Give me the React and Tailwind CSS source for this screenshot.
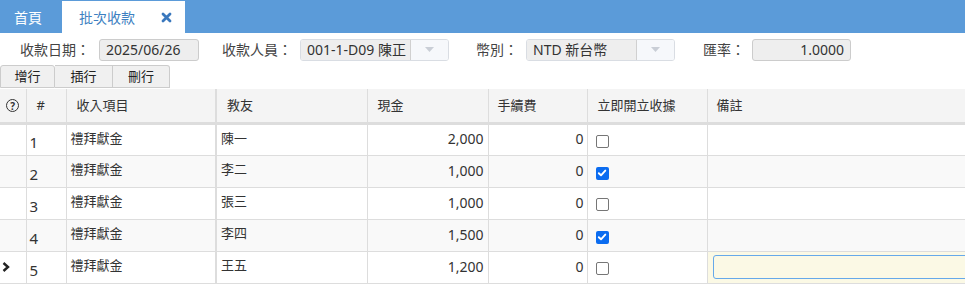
import React from 'react';

const rows = [
    { no: 1, item: '禮拜獻金', name: '陳一', cash: '2,000', fee: '0', receipt: false },
    { no: 2, item: '禮拜獻金', name: '李二', cash: '1,000', fee: '0', receipt: true },
    { no: 3, item: '禮拜獻金', name: '張三', cash: '1,000', fee: '0', receipt: false },
    { no: 4, item: '禮拜獻金', name: '李四', cash: '1,500', fee: '0', receipt: true },
    { no: 5, item: '禮拜獻金', name: '王五', cash: '1,200', fee: '0', receipt: false },
];

function Check({ on }) {
    if (on) {
        return (
            <span className="inline-flex w-[13px] h-[13px] rounded-[2px] bg-[#0b6cf0] items-center justify-center">
                <svg width="10" height="10" viewBox="0 0 10 10">
                    <path d="M1.8 5.2 L4 7.3 L8.3 2.6" fill="none" stroke="white" strokeWidth="1.9" strokeLinecap="round" strokeLinejoin="round" />
                </svg>
            </span>
        );
    }
    return <span className="inline-block w-[13px] h-[13px] rounded-[2px] border border-[#767676] bg-white"></span>;
}

function Caret() {
    return (
        <svg width="9" height="5" viewBox="0 0 9 5"><path d="M0 0 L9 0 L4.5 5 Z" fill="#c9ced6" /></svg>
    );
}

export default function App() {
    return (
        <div className="w-[965px] h-[305px] overflow-hidden bg-white text-[#333] text-[13px]" style={{ fontFamily: '"Noto Sans", "Noto Sans CJK TC", sans-serif' }}>
            {/* tab bar */}
            <div className="h-[33px] bg-[#5b9bd9] flex items-end">
                <div className="w-[62px] h-[32px] flex items-center pl-[14px] text-white text-[14px]">首頁</div>
                <div className="w-[123px] h-[32px] bg-white flex items-center pl-[17px] text-[14px] text-[#3d7fc1]">
                    <span>批次收款</span>
                    <svg className="ml-[26px]" width="11" height="11" viewBox="0 0 11 11">
                        <path d="M2 2 L9 9 M9 2 L2 9" stroke="#3a78bd" strokeWidth="2.8" strokeLinecap="round" />
                    </svg>
                </div>
            </div>

            {/* form row */}
            <div className="flex items-center h-[32px] pt-[1px]">
                <span className="ml-[20px] w-[79px] text-[14px] text-[#444]">收款日期：</span>
                <div className="w-[100px] h-[22px] bg-[#eeeeee] border border-[#cccccc] rounded-[3px] flex items-center pl-[6px] text-[14px] text-[#333]">2025/06/26</div>
                <span className="ml-[23px] w-[78px] text-[14px] text-[#444]">收款人員：</span>
                <div className="w-[149px] h-[22px] border border-[#d9dde3] rounded-[3px] flex overflow-hidden">
                    <div className="w-[110px] bg-[#eeeeee] border-r border-[#d0d0d0] flex items-center pl-[6px] text-[14px] whitespace-nowrap overflow-hidden">001-1-D09 陳正</div>
                    <div className="flex-1 bg-[#f6f8fb] flex items-center justify-center"><Caret /></div>
                </div>
                <span className="ml-[27px] w-[50px] text-[14px] text-[#444]">幣別：</span>
                <div className="w-[149px] h-[22px] border border-[#d9dde3] rounded-[3px] flex overflow-hidden">
                    <div className="w-[110px] bg-[#eeeeee] border-r border-[#d0d0d0] flex items-center pl-[6px] text-[14px] whitespace-nowrap">NTD 新台幣</div>
                    <div className="flex-1 bg-[#f6f8fb] flex items-center justify-center"><Caret /></div>
                </div>
                <span className="ml-[28px] w-[49px] text-[14px] text-[#444]">匯率：</span>
                <div className="w-[99px] h-[22px] bg-[#eeeeee] border border-[#cccccc] rounded-[3px] flex items-center justify-end pr-[6px] text-[14px]">1.0000</div>
            </div>

            {/* buttons */}
            <div className="flex h-[24px]">
                <button className="w-[55px] h-[23px] bg-[#f0f0f0] border border-[#cccccc] rounded-t-[3px] text-[13px] text-[#222]">增行</button>
                <button className="w-[58px] h-[23px] bg-[#f0f0f0] border border-l-0 border-[#cccccc] text-[13px] text-[#222]">插行</button>
                <button className="w-[57px] h-[23px] bg-[#f0f0f0] border border-l-0 border-[#cccccc] rounded-tr-[3px] text-[13px] text-[#222]">刪行</button>
            </div>

            {/* grid */}
            <table className="border-collapse table-fixed w-[1000px]">
                <colgroup>
                    <col className="w-[26px]" />
                    <col className="w-[40px]" />
                    <col className="w-[150px]" />
                    <col className="w-[151px]" />
                    <col className="w-[121px]" />
                    <col className="w-[99px]" />
                    <col className="w-[120px]" />
                    <col className="w-[293px]" />
                </colgroup>
                <thead>
                    <tr className="h-[34px] bg-[#f4f4f4] text-[13px] text-[#333]">
                        <th className="border-r border-b-[3px] border-[#dddddd] font-normal">
                            <span className="inline-flex w-[13px] h-[13px] rounded-full border-[1.5px] border-[#333] text-[10px] font-bold leading-none items-center justify-center">?</span>
                        </th>
                        <th className="border-r border-b-[3px] border-[#dddddd] font-normal text-left pl-[10px]">#</th>
                        <th className="border-r-2 border-b-[3px] border-[#dddddd] font-normal text-left pl-[10px]">收入項目</th>
                        <th className="border-r border-b-[3px] border-[#dddddd] font-normal text-left pl-[10px]">教友</th>
                        <th className="border-r border-b-[3px] border-[#dddddd] font-normal text-left pl-[10px]">現金</th>
                        <th className="border-r border-b-[3px] border-[#dddddd] font-normal text-left pl-[9px]">手續費</th>
                        <th className="border-r border-b-[3px] border-[#dddddd] font-normal text-left pl-[10px]">立即開立收據</th>
                        <th className="border-b-[3px] border-[#dddddd] font-normal text-left pl-[9px]">備註</th>
                    </tr>
                </thead>
                <tbody>
                    {rows.map((r, i) => (
                        <tr key={r.no} className={`h-[32px] ${i % 2 === 1 ? 'bg-[#f9f9f9]' : 'bg-white'}`}>
                            <td className="border-r border-b border-[#dddddd] align-middle">
                                {r.no === 5 && (
                                    <svg className="ml-[2px]" width="8" height="10" viewBox="0 0 8 10">
                                        <path d="M1.5 1 L6 5 L1.5 9" fill="none" stroke="#222" strokeWidth="2.4" />
                                    </svg>
                                )}
                            </td>
                            <td className="border-r border-b border-[#dddddd] pl-[3px] pt-[6px] text-[15px] text-[#333] align-middle">{r.no}</td>
                            <td className="border-r-2 border-b border-[#dddddd] pl-[4px] pb-[2px] align-middle">{r.item}</td>
                            <td className="border-r border-b border-[#dddddd] pl-[4px] pb-[2px] align-middle">{r.name}</td>
                            <td className="border-r border-b border-[#dddddd] pr-[4px] pb-[2px] text-right text-[14px] align-middle">{r.cash}</td>
                            <td className="border-r border-b border-[#dddddd] pr-[3px] pb-[2px] text-right text-[14px] align-middle">{r.fee}</td>
                            <td className="border-r border-b border-[#dddddd] pl-[8px] pt-[5px] align-middle leading-none"><Check on={r.receipt} /></td>
                            <td className={`border-b border-[#dddddd] align-middle ${r.no === 5 ? 'bg-[#fbf9e5] pl-[5px]' : ''}`}>
                                {r.no === 5 && (
                                    <div className="h-[24px] w-[300px] border border-[#66a9ea] rounded-[3px] bg-[#fbf9e5]"></div>
                                )}
                            </td>
                        </tr>
                    ))}
                </tbody>
            </table>
        </div>
    );
}
